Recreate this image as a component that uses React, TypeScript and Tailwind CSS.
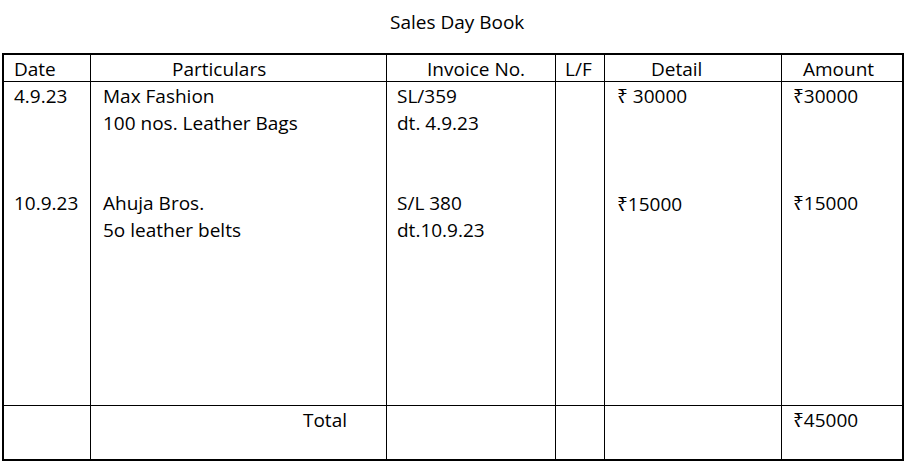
const font = { fontFamily: '"Open Sans", "Noto Sans", sans-serif' }

const cols = 'grid grid-cols-[86px_296px_169px_49px_177px_122px]'

export default function App() {
  return (
    <div className="w-[907px] h-[465px] bg-white text-black text-[19px] leading-[27px]" style={font}>
      <div className="h-[53px] pt-[9px] pl-[390px]">Sales Day Book</div>
      <div className="ml-[2px] w-[902px] border-2 border-black">
        {/* header */}
        <div className={`${cols} h-[27px] border-b border-black`}>
          <div className="pl-[10px] pt-px">Date</div>
          <div className="border-l border-black pl-[81px] pt-px">Particulars</div>
          <div className="border-l border-black pl-[40px] pt-px">Invoice No.</div>
          <div className="border-l border-black pl-[9px] pt-px">L/F</div>
          <div className="border-l border-black pl-[46px] pt-px">Detail</div>
          <div className="border-l border-black pl-[21px] pt-px">Amount</div>
        </div>

        {/* first entry */}
        <div className={`${cols} h-[108px]`}>
          <div className="pl-[10px] pt-px">4.9.23</div>
          <div className="border-l border-black pl-[12px] pt-px">
            <div>Max Fashion</div>
            <div>100 nos. Leather Bags</div>
          </div>
          <div className="border-l border-black pl-[10px] pt-px">
            <div>SL/359</div>
            <div>dt. 4.9.23</div>
          </div>
          <div className="border-l border-black"></div>
          <div className="border-l border-black pl-[12px] pt-px">₹ 30000</div>
          <div className="border-l border-black pl-[11px] pt-px">₹30000</div>
        </div>

        {/* second entry */}
        <div className={`${cols} h-[215px]`}>
          <div className="pl-[10px]">10.9.23</div>
          <div className="border-l border-black pl-[12px]">
            <div>Ahuja Bros.</div>
            <div>5o leather belts</div>
          </div>
          <div className="border-l border-black pl-[10px]">
            <div>S/L 380</div>
            <div>dt.10.9.23</div>
          </div>
          <div className="border-l border-black"></div>
          <div className="border-l border-black pl-[12px] pt-px">₹15000</div>
          <div className="border-l border-black pl-[11px]">₹15000</div>
        </div>

        {/* total */}
        <div className={`${cols} h-[54px] border-t border-black`}>
          <div></div>
          <div className="border-l border-black pt-px pr-[39px] text-right">Total</div>
          <div className="border-l border-black"></div>
          <div className="border-l border-black"></div>
          <div className="border-l border-black"></div>
          <div className="border-l border-black pl-[11px] pt-px">₹45000</div>
        </div>
      </div>
    </div>
  )
}
